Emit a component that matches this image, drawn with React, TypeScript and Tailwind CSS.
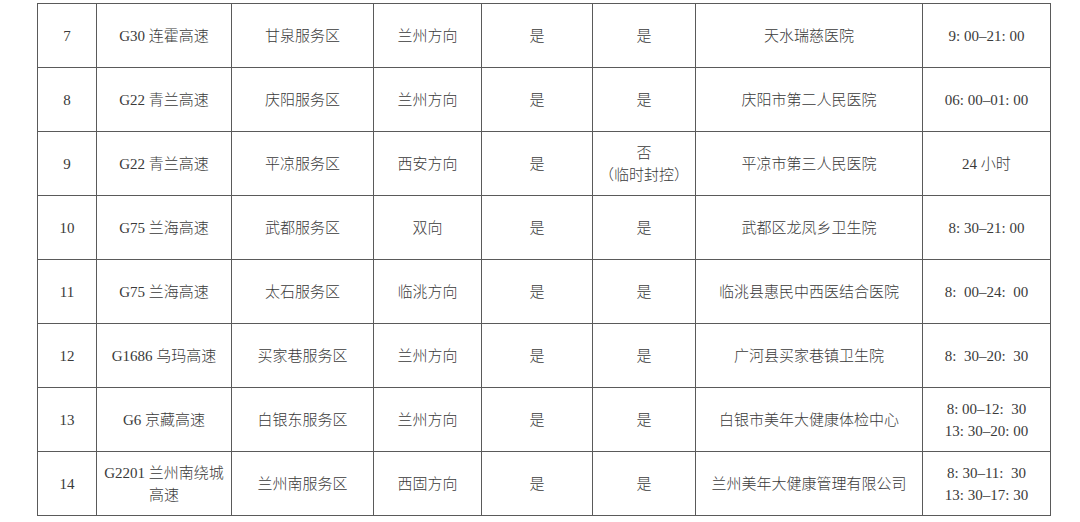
const rows: string[][] = [
  ['7', 'G30 连霍高速', '甘泉服务区', '兰州方向', '是', '是', '天水瑞慈医院', '9: 00–21: 00'],
  ['8', 'G22 青兰高速', '庆阳服务区', '兰州方向', '是', '是', '庆阳市第二人民医院', '06: 00–01: 00'],
  ['9', 'G22 青兰高速', '平凉服务区', '西安方向', '是', '否\n（临时封控）', '平凉市第三人民医院', '24 小时'],
  ['10', 'G75 兰海高速', '武都服务区', '双向', '是', '是', '武都区龙凤乡卫生院', '8: 30–21: 00'],
  ['11', 'G75 兰海高速', '太石服务区', '临洮方向', '是', '是', '临洮县惠民中西医结合医院', '8:  00–24:  00'],
  ['12', 'G1686 乌玛高速', '买家巷服务区', '兰州方向', '是', '是', '广河县买家巷镇卫生院', '8:  30–20:  30'],
  ['13', 'G6 京藏高速', '白银东服务区', '兰州方向', '是', '是', '白银市美年大健康体检中心', '8: 00–12:  30\n13: 30–20: 00'],
  ['14', 'G2201 兰州南绕城\n高速', '兰州南服务区', '西固方向', '是', '是', '兰州美年大健康管理有限公司', '8: 30–11:  30\n13: 30–17: 30'],
];

export default function App() {
  return (
    <div className="w-[1080px] h-[522px] bg-white pt-[3px] pl-[37px] overflow-hidden">
      <div className="grid grid-cols-[58px_134px_141px_107px_110px_102px_226px_127px] auto-rows-[63px] gap-px p-px bg-[#5a5a5a] w-fit">
        {rows.flatMap((row, r) =>
          row.map((cell, c) => (
            <div
              key={`${r}-${c}`}
              className="bg-white flex items-center justify-center text-center whitespace-pre-wrap text-[15px] leading-[22px] text-[#3a3a3a] font-light"
              style={{ fontFamily: '"Liberation Serif", "Noto Sans CJK SC", serif' }}
            >
              {cell}
            </div>
          ))
        )}
      </div>
    </div>
  );
}
